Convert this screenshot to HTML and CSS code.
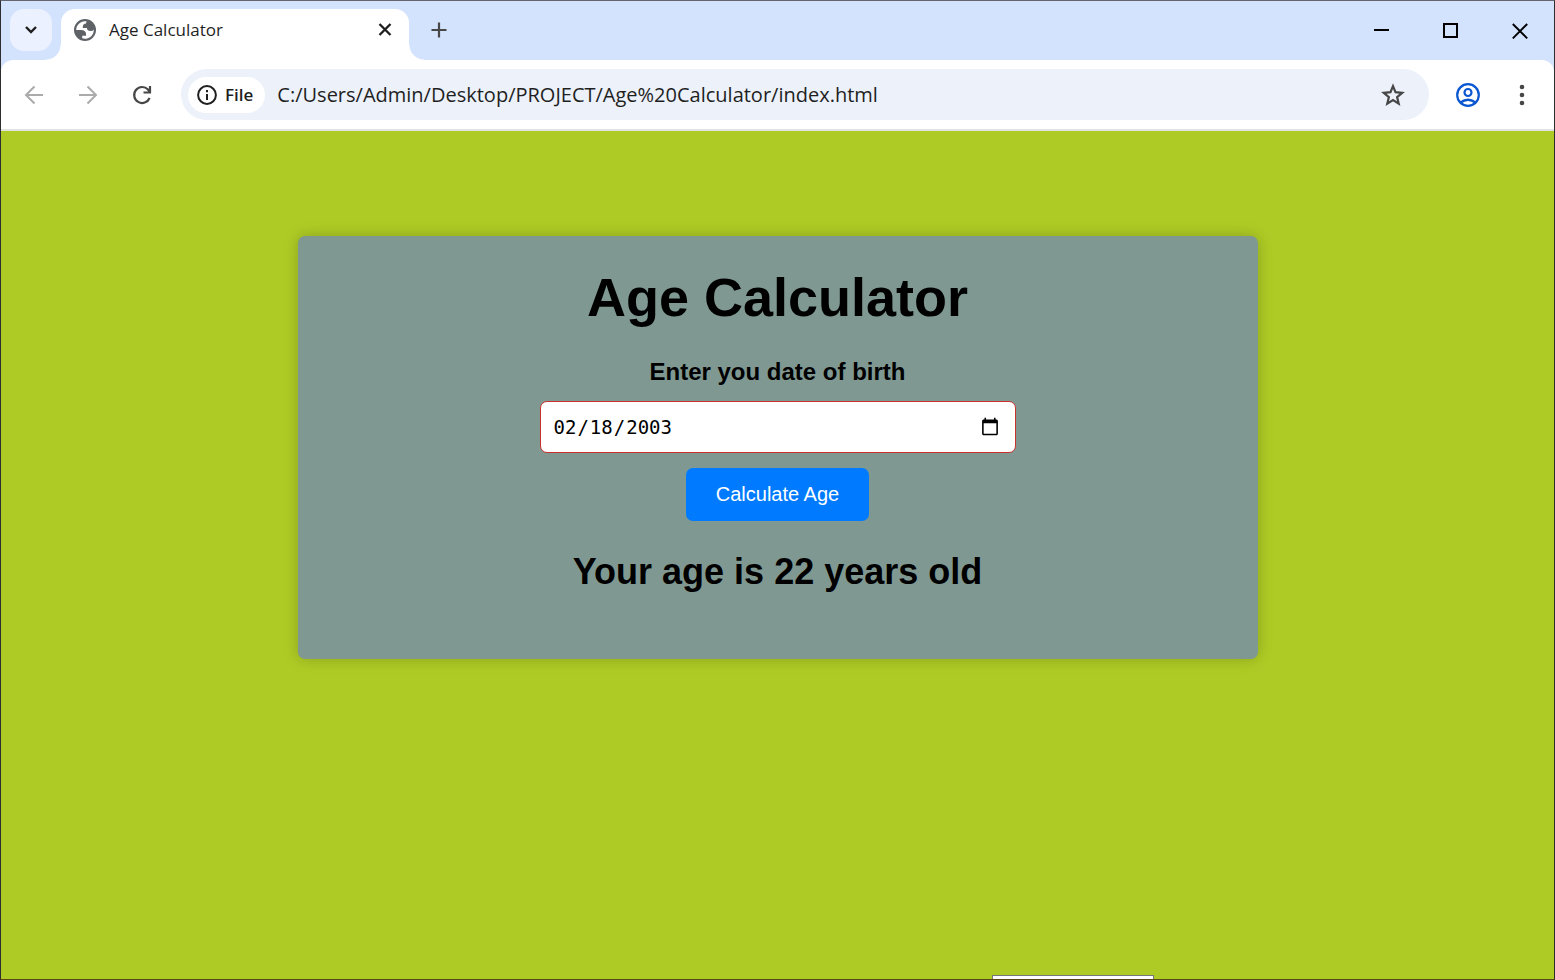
FILE: index.html
```html
<!DOCTYPE html>
<html lang="en">
<head>
<meta charset="utf-8">
<title>Age Calculator</title>
<link rel="stylesheet" href="styles.css">
</head>
<body>
<div class="window">
  <header class="tabstrip">
    <button class="tab-search" aria-label="Search tabs"><svg width="14" height="10" viewBox="0 0 14 10"><path d="M2 2l5 5 5-5" fill="none" stroke="#1f1f1f" stroke-width="2.4"/></svg></button>
    <div class="tab">
      <svg class="globe" width="22" height="22" viewBox="2 2 20 20"><circle cx="12" cy="12" r="10" fill="#5f6368"/><path d="M4 12h4.400c3.407.022 4.922 1.730 4.543 5.127H9.488v2.470a8.004 8.004 0 0 0 10.498-8.083C19.327 12.504 18.332 13 17 13c-2.137 0-3.206-.916-3.206-2.750h-3.748c-.274-2.728.683-4.092 2.870-4.092 0-.975.327-1.597.811-1.970A8.004 8.004 0 0 0 4 12z" fill="#fff"/></svg>
      <span class="tab-title">Age Calculator</span>
      <button class="tab-close" aria-label="Close tab"><svg width="14" height="14" viewBox="0 0 14 14"><path d="M1.500 1l11 11M12.500 1l-11 11" stroke="#1f1f1f" stroke-width="2.300"/></svg></button>
    </div>
    <button class="new-tab" aria-label="New tab"><svg width="16" height="16" viewBox="0 0 16 16"><path d="M8 .5v15M.5 8h15" stroke="#474747" stroke-width="2.200"/></svg></button>
    <div class="window-controls">
      <button aria-label="Minimize"><svg width="16" height="16" viewBox="0 0 16 16"><path d="M0 7h15" stroke="#000" stroke-width="2"/></svg></button>
      <button aria-label="Maximize"><svg width="16" height="16" viewBox="0 0 16 16"><path d="M1 1h13v13H1z" fill="none" stroke="#000" stroke-width="2"/></svg></button>
      <button aria-label="Close"><svg width="16" height="16" viewBox="0 0 16 16"><path d="M.8 1l14.400 14.400M15.200 1L.8 15.400" stroke="#000" stroke-width="1.900"/></svg></button>
    </div>
  </header>
  <nav class="toolbar" aria-label="Browser toolbar">
    <div class="nav-buttons">
      <button aria-label="Back"><svg width="20" height="20" viewBox="0 0 20 20"><path d="M19 10H2.500M10.500 1.500L2 10l8.500 8.500" fill="none" stroke="#ababab" stroke-width="2"/></svg></button>
      <button aria-label="Forward"><svg width="20" height="20" viewBox="0 0 20 20"><path d="M1 10h16.500M9.500 1.500L18 10l-8.500 8.500" fill="none" stroke="#ababab" stroke-width="2"/></svg></button>
      <button aria-label="Reload"><svg width="20" height="20" viewBox="0 0 20 20"><path d="M17.600 13A8 8 0 1 1 16 4.500l1.500 2M18 1v6.500h-6.500" fill="none" stroke="#474747" stroke-width="2.200"/></svg></button>
    </div>
    <div class="address-bar">
      <button class="file-chip"><svg width="20" height="20" viewBox="0 0 20 20"><circle cx="10" cy="10" r="8.900" fill="none" stroke="#1f1f1f" stroke-width="2"/><path d="M10 9v6M10 5v2.200" stroke="#1f1f1f" stroke-width="2"/></svg><span>File</span></button>
      <input class="address" type="text" aria-label="Address" value="C:/Users/Admin/Desktop/PROJECT/Age%20Calculator/index.html">
      <button class="star" aria-label="Bookmark this page"><svg width="24" height="24" viewBox="0 0 24 24"><path d="M12 3.200l2.500 6 6.700.6-5.100 4.300 1.600 6.500L12 17.100l-5.700 3.500 1.600-6.500-5.100-4.300 6.700-.6z" fill="none" stroke="#474747" stroke-width="2.200"/></svg></button>
    </div>
    <button class="profile" aria-label="Profile"><svg width="24" height="24" viewBox="0 0 24 24"><g fill="none" stroke="#0b57d0" stroke-width="2.200"><circle cx="12" cy="12" r="10.800"/><circle cx="12" cy="9.500" r="3.500"/><path d="M4.500 19.500q7.500-5.500 15 0"/></g></svg></button>
    <button class="menu" aria-label="Menu"><svg width="6" height="22" viewBox="0 0 6 22"><g fill="#474747"><circle cx="3" cy="3" r="2.300"/><circle cx="3" cy="11" r="2.300"/><circle cx="3" cy="19" r="2.300"/></g></svg></button>
  </nav>
  <main class="page">
    <form class="card">
      <h1>Age Calculator</h1>
      <label for="birthday">Enter you date of birth</label>
      <input class="birthday" id="birthday" type="date" value="2003-02-18">
      <button class="calculate" type="button">Calculate Age</button>
      <output class="result" for="birthday">Your age is 22 years old</output>
    </form>
    <div class="popup-edge"></div>
  </main>
</div>
</body>
</html>
```
FILE: styles.css
```css
* { box-sizing: border-box; }

body {
  margin: 0;
  font-family: "Open Sans", "Noto Sans", sans-serif;
  color: #1f1f1f;
}

button {
  border: 0;
  padding: 0;
  background: transparent;
  font: inherit;
  color: inherit;
}

svg { display: block; }

.window {
  display: flex;
  flex-direction: column;
  min-height: 100vh;
  border: 1px solid #2e2e30;
  border-top-color: #65656f;
  border-bottom-color: #5a4518;
  background: #d3e2fd;
}

.tabstrip {
  display: flex;
  height: 59px;
  padding: 8px 0 0 9px;
  background: #d3e2fd;
}

.tab-search {
  display: grid;
  place-items: center;
  width: 42px;
  height: 42px;
  border-radius: 14px;
  background: #ebf1fe;
}

.tab {
  position: relative;
  display: flex;
  align-items: center;
  width: 348px;
  height: 51px;
  margin-left: 9px;
  padding: 0 17px 9px 13px;
  border-radius: 14px 14px 0 0;
  background: #fff;
}

.tab::before,
.tab::after {
  content: "";
  position: absolute;
  bottom: 0;
  width: 15px;
  height: 15px;
}

.tab::before {
  right: 100%;
  background: radial-gradient(circle at 0 0, transparent 14px, #fff 15px);
}

.tab::after {
  left: 100%;
  background: radial-gradient(circle at 100% 0, transparent 14px, #fff 15px);
}

.tab-title {
  flex: 1;
  margin-left: 13px;
  font-size: 17px;
  line-height: 24px;
}

.new-tab {
  display: grid;
  place-items: center;
  width: 36px;
  height: 42px;
  margin-left: 12px;
}

.window-controls {
  display: flex;
  height: 44px;
  margin-left: auto;
}

.window-controls button {
  display: grid;
  place-items: center;
  width: 69px;
}

.toolbar {
  display: flex;
  align-items: center;
  height: 71px;
  padding: 0 29px 0 23px;
  border-bottom: 2px solid #e1e3e1;
  border-radius: 12px 12px 0 0;
  background: #fff;
}

.nav-buttons {
  display: flex;
  gap: 34px;
}

.address-bar {
  display: flex;
  flex: 1;
  align-items: center;
  height: 51px;
  margin: 0 27px 0 29px;
  padding: 0 24px 0 7px;
  border-radius: 26px;
  background: #ecf1fa;
}

.file-chip {
  display: flex;
  align-items: center;
  gap: 8px;
  height: 36px;
  padding: 0 12px 0 9px;
  border-radius: 18px;
  background: #fff;
  font-size: 17px;
  font-weight: 600;
}

.address {
  flex: 1;
  min-width: 0;
  margin: 0 12px;
  padding: 0;
  border: 0;
  outline: 0;
  background: transparent;
  color: inherit;
  font: 20px/28px "Open Sans", "Noto Sans", sans-serif;
}

.menu { margin-left: 39px; }

.page {
  position: relative;
  flex: 1;
  padding: 105px 30px 30px;
  overflow: hidden;
  background: #aecb25;
  color: #000;
  font-family: "Liberation Sans", Arial, sans-serif;
}

.card {
  display: flex;
  flex-direction: column;
  align-items: center;
  max-width: 960px;
  margin: 0 auto;
  padding: 30px 30px 67px;
  border-radius: 7px;
  background: #7f9992;
  box-shadow: 0 0 15px rgba(0, 0, 0, 0.2);
}

.card h1 {
  margin: 0 0 30px;
  font-size: 54px;
  line-height: 62px;
}

.card label {
  margin-bottom: 15px;
  font-size: 24px;
  font-weight: bold;
  line-height: 28px;
}

.birthday {
  width: 100%;
  max-width: 476px;
  height: 52px;
  margin-bottom: 15px;
  padding: 0 13px 0 12px;
  border: 1px solid #c9302c;
  border-radius: 7px;
  background: #fff;
  color: #000;
  font-family: "DejaVu Sans Mono", monospace;
  font-size: 19px;
}

.birthday::-webkit-calendar-picker-indicator {
  width: 20px;
  height: 20px;
}

.calculate {
  height: 53px;
  padding: 0 30px;
  border-radius: 7px;
  background: #007bff;
  color: #fff;
  font-size: 20px;
  font-family: inherit;
}

.result {
  margin-top: 30px;
  font-size: 36px;
  font-weight: bold;
  line-height: 41px;
}

.popup-edge {
  position: absolute;
  right: 400px;
  bottom: -1px;
  width: 162px;
  height: 5px;
  border: 1px solid #767676;
  border-bottom: 0;
  background: #fff;
}
```
